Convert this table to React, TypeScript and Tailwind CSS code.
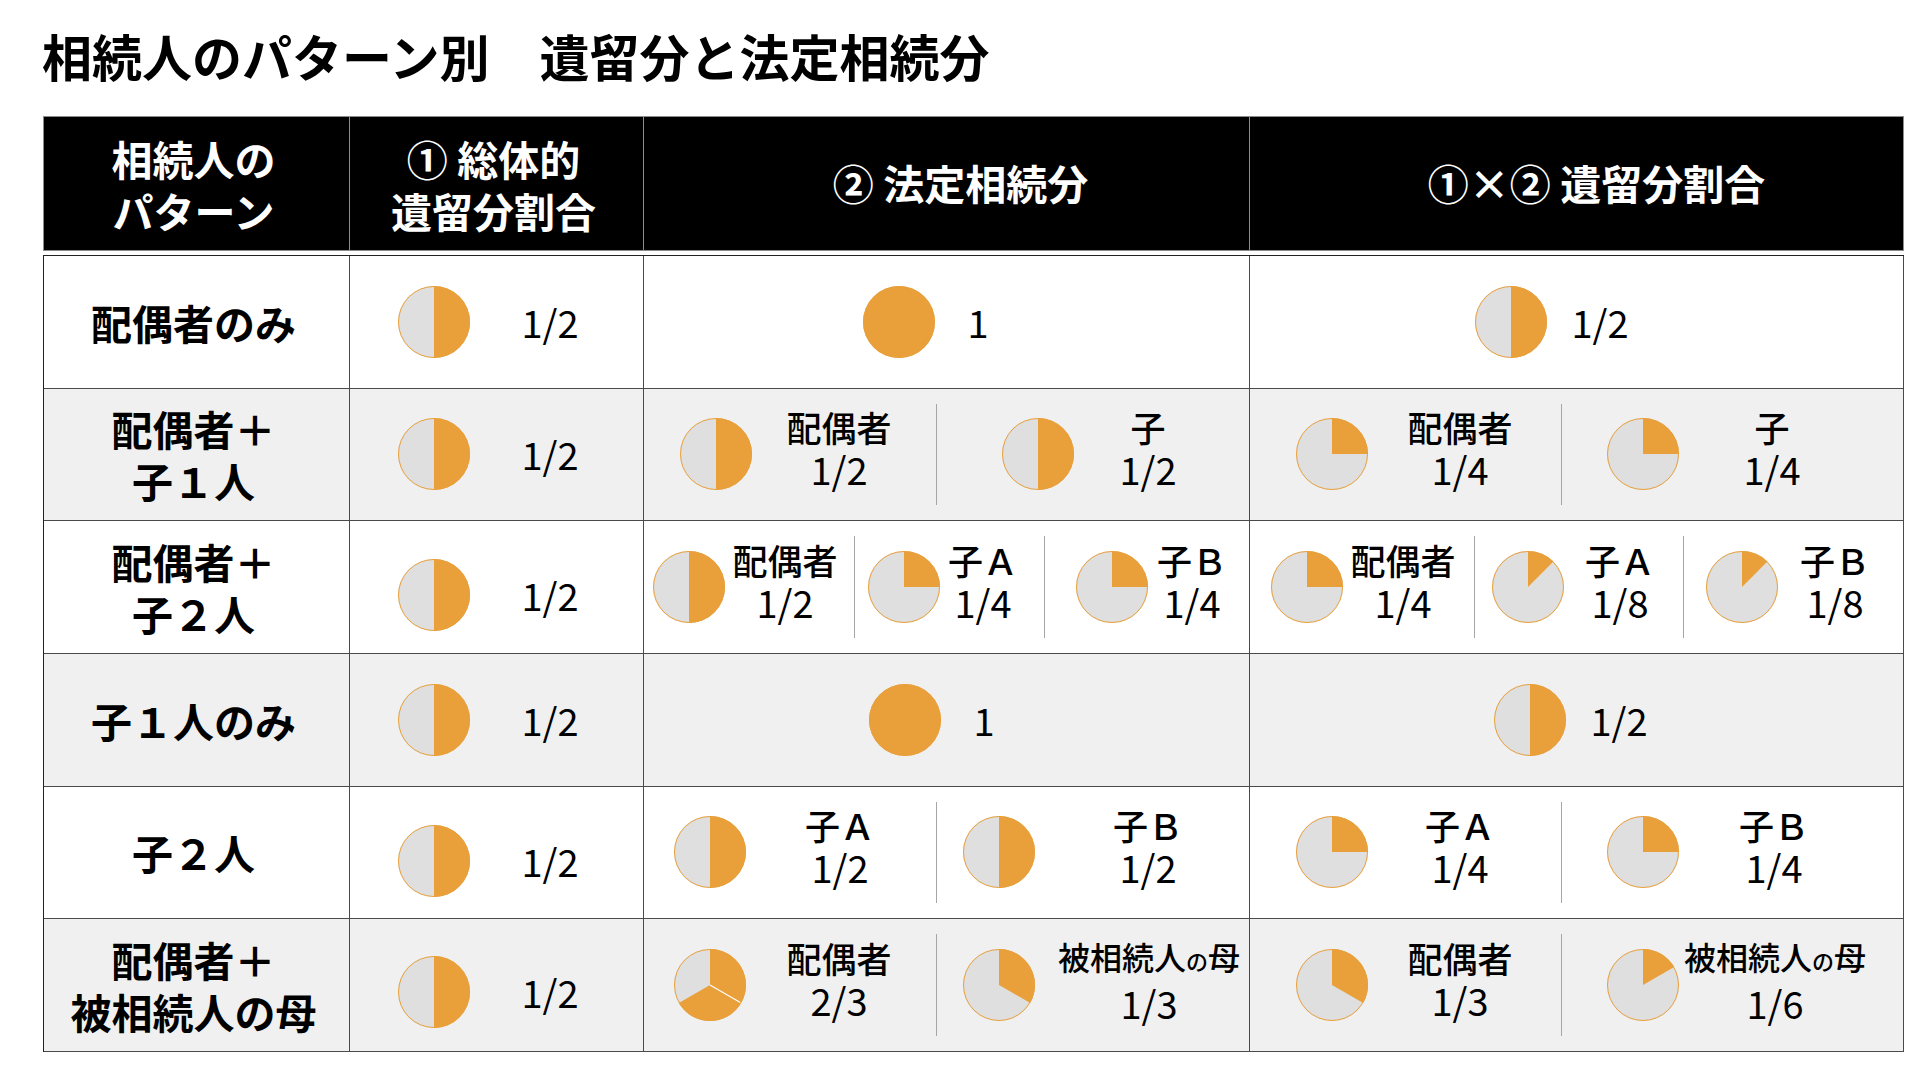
import type { ReactNode } from "react";

const ORANGE = "#E9A03B";
const GRAY = "#DFDFDF";

function Pie({ frac, splits = [] }: { frac: number; splits?: number[] }) {
  const c = 37;
  const r = 36;
  const at = (t: number) => {
    const a = t * Math.PI * 2;
    return { x: c + r * Math.sin(a), y: c - r * Math.cos(a) };
  };
  const end = at(frac);
  return (
    <svg width="74" height="74" viewBox="0 0 74 74" className="block shrink-0">
      {frac >= 1 ? (
        <circle cx={c} cy={c} r={r} fill={ORANGE} />
      ) : (
        <>
          <circle cx={c} cy={c} r={r} fill={GRAY} />
          <path
            d={`M${c} ${c} L${c} ${c - r} A${r} ${r} 0 ${frac > 0.5 ? 1 : 0} 1 ${end.x.toFixed(2)} ${end.y.toFixed(2)} Z`}
            fill={ORANGE}
          />
          {splits.map((t) => {
            const p = at(t);
            return <line key={t} x1={c} y1={c} x2={p.x} y2={p.y} stroke="#ffffff" strokeWidth="1.2" />;
          })}
        </>
      )}
      <circle cx={c} cy={c} r={r - 0.5} fill="none" stroke={ORANGE} strokeWidth="1" />
    </svg>
  );
}

type ShareProps = {
  frac: number;
  splits?: number[];
  label?: ReactNode;
  small?: boolean;
  value: string;
  pie: string;
  text: string;
  className?: string;
};

function Share({ frac, splits, label, small, value, pie, text, className = "" }: ShareProps) {
  return (
    <div className={`flex items-center ${className}`}>
      <div className={`shrink-0 ${pie}`}>
        <Pie frac={frac} splits={splits} />
      </div>
      <div
        className={`flex w-[100px] shrink-0 flex-col items-center whitespace-nowrap ${label ? "pb-[12px]" : ""} ${text}`}
      >
        {label &&
          (small ? (
            <div className="text-[32px] font-medium leading-[44px]">{label}</div>
          ) : (
            <div className="text-[35px] font-medium leading-[42px]">{label}</div>
          ))}
        <div className="text-[38px] leading-[42px]">{value}</div>
      </div>
    </div>
  );
}

const Mother = () => (
  <span>
    被相続人<span className="text-[22px]">の</span>母
  </span>
);

type RowProps = {
  bg: string;
  name: ReactNode;
  shift?: string;
  c3: ReactNode;
  c4: ReactNode;
};

function Row({ bg, name, shift = "", c3, c4 }: RowProps) {
  return (
    <div className={`grid h-[132.67px] grid-cols-[306px_294px_606px_654px] border-b border-[#4a4a4a] ${bg}`}>
      <div className="flex flex-col items-center justify-center border-r border-[#4a4a4a] pr-[6px] text-[41px] font-bold leading-[52px]">
        {name}
      </div>
      <div className={`flex border-r border-[#4a4a4a] ${shift}`}>
        <Share frac={0.5} value="1/2" pie="ml-[47px]" text="ml-[29px]" className="flex-1" />
      </div>
      <div className="flex border-r border-[#4a4a4a]">{c3}</div>
      <div className="flex border-r border-[#4a4a4a]">{c4}</div>
    </div>
  );
}

function Split({ children }: { children: ReactNode }) {
  return <div className="flex flex-1 items-stretch py-[15px]">{children}</div>;
}

export default function App() {
  return (
    <div className="h-[1080px] w-[1920px] overflow-hidden bg-white font-['Noto_Sans_CJK_JP',sans-serif] text-black">
      <h1 className="pl-[42px] pt-[30px] text-[50px] font-bold leading-[50px]">
        相続人のパターン別　遺留分と法定相続分
      </h1>

      <div className="ml-[43px] mt-[36px] w-[1861px]">
        <div className="grid h-[135px] grid-cols-[306px_294px_606px_654px] border-b border-l border-t border-[#8c8c8c] bg-black text-[41px] font-bold leading-[52px] text-white">
          <div className="flex flex-col items-center justify-center border-r border-[#8c8c8c] pr-[6px]">
            <div>相続人の</div>
            <div>パターン</div>
          </div>
          <div className="flex flex-col items-center justify-center border-r border-[#8c8c8c] pr-[6px]">
            <div>① 総体的</div>
            <div>遺留分割合</div>
          </div>
          <div className="flex items-center justify-center border-r border-[#8c8c8c] pb-[4px] pl-[28px]">
            ② 法定相続分
          </div>
          <div className="flex items-center justify-center border-r border-[#8c8c8c] pb-[4px] pl-[40px]">
            ①×② 遺留分割合
          </div>
        </div>

        <div className="mt-[4px] border-l border-t border-[#222222]">
          <Row
            bg="bg-white"
            name="配偶者のみ"
            c3={<Share frac={1} value="1" pie="ml-[218px]" text="ml-[-8px]" />}
            c4={<Share frac={0.5} value="1/2" pie="ml-[224px]" text="ml-[2px]" />}
          />

          <Row
            bg="bg-[#f0f0f0]"
            name={
              <>
                <div>配偶者＋</div>
                <div>子１人</div>
              </>
            }
            c3={
              <Split>
                <Share frac={0.5} label="配偶者" value="1/2" pie="ml-[35px]" text="ml-[36px]" className="w-[292px]" />
                <Share
                  frac={0.5}
                  label="子"
                  value="1/2"
                  pie="ml-[64px]"
                  text="ml-[23px]"
                  className="flex-1 border-l border-[#a6a6a6]"
                />
              </Split>
            }
            c4={
              <Split>
                <Share frac={0.25} label="配偶者" value="1/4" pie="ml-[45px]" text="ml-[41px]" className="w-[311px]" />
                <Share
                  frac={0.25}
                  label="子"
                  value="1/4"
                  pie="ml-[44px]"
                  text="ml-[42px]"
                  className="flex-1 border-l border-[#a6a6a6]"
                />
              </Split>
            }
          />

          <Row
            bg="bg-white"
            shift="pt-[16px]"
            name={
              <>
                <div>配偶者＋</div>
                <div>子２人</div>
              </>
            }
            c3={
              <Split>
                <Share frac={0.5} label="配偶者" value="1/2" pie="ml-[8px]" text="ml-[9px]" className="w-[210px]" />
                <Share
                  frac={0.25}
                  label="子Ａ"
                  value="1/4"
                  pie="ml-[12px]"
                  text="ml-[-8px]"
                  className="w-[190px] border-l border-[#a6a6a6]"
                />
                <Share
                  frac={0.25}
                  label="子Ｂ"
                  value="1/4"
                  pie="ml-[30px]"
                  text="ml-[-7px]"
                  className="flex-1 border-l border-[#a6a6a6]"
                />
              </Split>
            }
            c4={
              <Split>
                <Share frac={0.25} label="配偶者" value="1/4" pie="ml-[20px]" text="ml-[9px]" className="w-[224px]" />
                <Share
                  frac={0.125}
                  label="子Ａ"
                  value="1/8"
                  pie="ml-[16px]"
                  text="ml-[5px]"
                  className="w-[209px] border-l border-[#a6a6a6]"
                />
                <Share
                  frac={0.125}
                  label="子Ｂ"
                  value="1/8"
                  pie="ml-[21px]"
                  text="ml-[6px]"
                  className="flex-1 border-l border-[#a6a6a6]"
                />
              </Split>
            }
          />

          <Row
            bg="bg-[#f0f0f0]"
            name="子１人のみ"
            c3={<Share frac={1} value="1" pie="ml-[224px]" text="ml-[-8px]" />}
            c4={<Share frac={0.5} value="1/2" pie="ml-[243px]" text="ml-[2px]" />}
          />

          <Row
            bg="bg-white"
            shift="pt-[18px]"
            name="子２人"
            c3={
              <Split>
                <Share frac={0.5} label="子Ａ" value="1/2" pie="ml-[29px]" text="ml-[43px]" className="w-[292px]" />
                <Share
                  frac={0.5}
                  label="子Ｂ"
                  value="1/2"
                  pie="ml-[25px]"
                  text="ml-[62px]"
                  className="flex-1 border-l border-[#a6a6a6]"
                />
              </Split>
            }
            c4={
              <Split>
                <Share frac={0.25} label="子Ａ" value="1/4" pie="ml-[45px]" text="ml-[41px]" className="w-[311px]" />
                <Share
                  frac={0.25}
                  label="子Ｂ"
                  value="1/4"
                  pie="ml-[44px]"
                  text="ml-[44px]"
                  className="flex-1 border-l border-[#a6a6a6]"
                />
              </Split>
            }
          />

          <Row
            bg="bg-[#f0f0f0]"
            shift="pt-[14px]"
            name={
              <>
                <div>配偶者＋</div>
                <div>被相続人の母</div>
              </>
            }
            c3={
              <Split>
                <Share
                  frac={2 / 3}
                  splits={[1 / 3]}
                  label="配偶者"
                  value="2/3"
                  pie="ml-[29px]"
                  text="ml-[42px]"
                  className="w-[292px]"
                />
                <Share
                  frac={1 / 3}
                  label={<Mother />}
                  small
                  value="1/3"
                  pie="ml-[25px]"
                  text="ml-[63px]"
                  className="flex-1 border-l border-[#a6a6a6]"
                />
              </Split>
            }
            c4={
              <Split>
                <Share frac={1 / 3} label="配偶者" value="1/3" pie="ml-[45px]" text="ml-[41px]" className="w-[311px]" />
                <Share
                  frac={1 / 6}
                  label={<Mother />}
                  small
                  value="1/6"
                  pie="ml-[44px]"
                  text="ml-[45px]"
                  className="flex-1 border-l border-[#a6a6a6]"
                />
              </Split>
            }
          />
        </div>
      </div>
    </div>
  );
}
